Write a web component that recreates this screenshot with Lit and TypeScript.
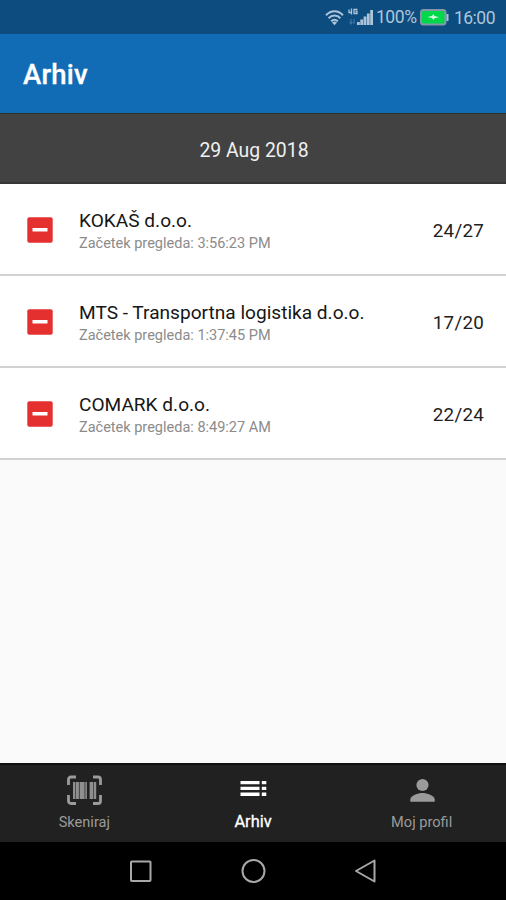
import { LitElement, html, svg, css } from "lit";
import { customElement } from "lit/decorators.js";

interface Inspection {
  company: string;
  started: string;
  score: string;
}

const inspections: Inspection[] = [
  { company: "KOKAŠ d.o.o.", started: "3:56:23 PM", score: "24/27" },
  { company: "MTS - Transportna logistika d.o.o.", started: "1:37:45 PM", score: "17/20" },
  { company: "COMARK d.o.o.", started: "8:49:27 AM", score: "22/24" },
];

@customElement("status-bar")
class StatusBar extends LitElement {
  static styles = css`
    :host {
      display: flex;
      align-items: center;
      justify-content: flex-end;
      height: 34px;
      box-sizing: border-box;
      padding-right: 11px;
      background: #0d4c7f;
      color: #aec5d9;
      font-size: 17.5px;
    }
    svg { display: block; flex: none; }
    .wifi { margin-right: 4px; }
    .signal { margin-right: 2px; }
    .percent { width: 40px; margin-right: 4px; white-space: nowrap; letter-spacing: -0.4px; }
    .battery { margin-right: 5px; }
    .clock { padding-top: 2px; letter-spacing: -0.5px; }
  `;
  render() {
    return html`
      <svg class="wifi" width="19" height="17" viewBox="0 0 19 17" fill="none" stroke="#aec5d9" stroke-width="2">
        <path d="M1 6.200C6 .8 13 .8 18 6.200M3.600 9.300C7 5.600 12 5.600 15.400 9.300M6.200 12.200c2-2.100 4.600-2.100 6.600 0" />
        <path d="M9.500 16.200 7 13.600q2.500-2 5 0z" fill="#aec5d9" stroke="none" />
      </svg>
      <svg class="signal" width="26" height="18" viewBox="0 0 26 18" fill="none">
        <path d="M1 1.500v3h3M3.500 .5v6M9.500 1.500H6v4h3v-2H7.500" stroke="#aec5d9" stroke-width="1.300" />
        <path d="M3 11v5m-1.500-2L3 16l1.500-2M6 16v-5" stroke="#3b77a5" stroke-width="1.200" />
        <path d="M9 14h2.800v3H9zM12.300 11.500h2.800V17h-2.800zM15.600 8.500h2.800V17h-2.800zM18.900 5.500h2.800V17h-2.800zM22.200 2H25v15h-2.800z" fill="#aec5d9" />
      </svg>
      <span class="percent">100%</span>
      <svg class="battery" width="29" height="17" viewBox="0 0 29 17">
        <rect x="1" y="1" width="24.500" height="14.500" rx="2.500" fill="#00d84c" stroke="#8498a8" stroke-width="2" />
        <path d="M26.500 5h2v7h-2z" fill="#aec5d9" />
        <path d="M7.500 8 12 7l1.300-2 1.200 2 4.500 1.200-4.500 1L13.300 11 12 9z" fill="#d6ffe0" />
      </svg>
      <span class="clock">16:00</span>
    `;
  }
}

@customElement("inspection-row")
class InspectionRow extends LitElement {
  static properties = { item: { attribute: false } };
  declare item: Inspection;
  static styles = css`
    :host {
      display: flex;
      align-items: center;
      height: 92px;
      box-sizing: border-box;
      padding: 2px 22px 0 27px;
      border-bottom: 2px solid #d2d2d2;
      background: #fff;
    }
    svg { flex: none; margin-right: 26px; }
    .text { flex: 1; white-space: nowrap; padding-top: 2px; }
    .company { font-size: 19.1px; line-height: 24px; color: #161616; }
    .started { font-size: 14.5px; line-height: 21px; color: #8b8b8b; }
    .score { font-size: 18.8px; color: #222; padding-top: 1px; letter-spacing: 0.25px; }
  `;
  render() {
    return html`
      <svg width="26" height="26" viewBox="0 0 26 26">
        <rect x=".3" y=".3" width="25.400" height="25.400" rx="2" fill="#e53030" />
        <path d="M5.500 11h15v3.500h-15z" fill="#fff" />
      </svg>
      <div class="text">
        <div class="company">${this.item.company}</div>
        <div class="started">Začetek pregleda: ${this.item.started}</div>
      </div>
      <div class="score">${this.item.score}</div>
    `;
  }
}

const scanIcon = svg`
  <path d="M2.500 10V4.500Q2.500 2 5 2h5M27 2h5q2.500 0 2.500 2.500V10M34.500 20v6q0 2.500-2.500 2.500h-5M10 28.500H5q-2.500 0-2.500-2.500v-6" fill="none" stroke="#9b9b9b" stroke-width="2.800" />
  <path d="M7 7h2v17H7zM9.600 7h3.300v17H9.600zM13.600 7h5v17h-5zM19.300 7h1.600v17h-1.600zM23.600 7h3.700v17h-3.700zM27.900 7h2.300v17h-2.300z" fill="#8f8f8f" />`;
const listIcon = svg`
  <path d="M5.500 6h19v3.300h-19zM5.500 11.800h19v3.300h-19zM5.500 17.600h19v3.300h-19zM26.800 6h4.500v3.300h-4.500zM26.800 11.800h4.500v3.300h-4.500zM26.800 17.600h4.500v3.300h-4.500z" fill="#fff" />`;
const personIcon = svg`
  <circle cx="18.500" cy="10" r="6.100" fill="#9b9b9b" />
  <path d="M6.300 26.800v-2.200c0-4.200 8-6.600 12.200-6.600s12.200 2.400 12.200 6.600v2.200z" fill="#9b9b9b" />`;

@customElement("app-root")
class AppRoot extends LitElement {
  static styles = css`
    :host {
      display: flex;
      flex-direction: column;
      height: 900px;
      background: #fafafa;
      font-family: Roboto, "Liberation Sans", sans-serif;
    }
    .toolbar {
      display: flex;
      align-items: center;
      height: 79px;
      box-sizing: border-box;
      padding: 1px 0 0 23px;
      background: #116cb5;
      color: #fff;
      font-size: 27.5px;
      font-weight: 500;
      letter-spacing: 0.2px;
      -webkit-text-stroke: 0.3px #fff;
    }
    .date {
      display: flex;
      align-items: center;
      justify-content: center;
      height: 71px;
      box-sizing: border-box;
      padding: 4px 0 0 2px;
      background: #424242;
      border-top: 1px solid #2c3326;
      border-bottom: 2px solid #363636;
      color: #f0f0f0;
      font-size: 19.4px;
    }
    .list { flex: 1; }
    .tabs {
      display: grid;
      grid-template-columns: repeat(3, 1fr);
      height: 79px;
      box-sizing: border-box;
      border-top: 2px solid #101010;
      background: #212121;
    }
    .tab {
      display: flex;
      flex-direction: column;
      align-items: center;
      padding-top: 10px;
      color: #9b9b9b;
      font-size: 14.6px;
      line-height: 20px;
    }
    .tab svg { margin-bottom: 6px; }
    .tab.active { color: #fff; font-size: 16.4px; -webkit-text-stroke: 0.3px #fff; }
    .system {
      display: flex;
      align-items: center;
      justify-content: center;
      gap: 88px;
      height: 58px;
      background: #000;
    }
  `;

  tab(label: string, icon: unknown, active = false) {
    return html`<div class="tab ${active ? "active" : ""}">
      <svg width="36" height="31" viewBox="0 0 36 31">${icon}</svg>
      <span>${label}</span>
    </div>`;
  }

  render() {
    return html`
      <status-bar></status-bar>
      <div class="toolbar">Arhiv</div>
      <div class="date">29 Aug 2018</div>
      <div class="list">
        ${inspections.map((item) => html`<inspection-row .item=${item}></inspection-row>`)}
      </div>
      <div class="tabs">
        ${this.tab("Skeniraj", scanIcon)}
        ${this.tab("Arhiv", listIcon, true)}
        ${this.tab("Moj profil", personIcon)}
      </div>
      <div class="system">
        <svg width="24" height="26" viewBox="0 0 24 26"><rect x="3" y="3.500" width="19.500" height="19.500" rx=".8" fill="none" stroke="#a8a8a8" stroke-width="2" /></svg>
        <svg width="26" height="26" viewBox="0 0 26 26"><circle cx="13.500" cy="13" r="11" fill="none" stroke="#a8a8a8" stroke-width="2" /></svg>
        <svg width="24" height="26" viewBox="0 0 24 26"><path d="M20.500 2.500v21L2 13z" fill="none" stroke="#a8a8a8" stroke-width="2" stroke-linejoin="round" /></svg>
      </div>
    `;
  }
}
